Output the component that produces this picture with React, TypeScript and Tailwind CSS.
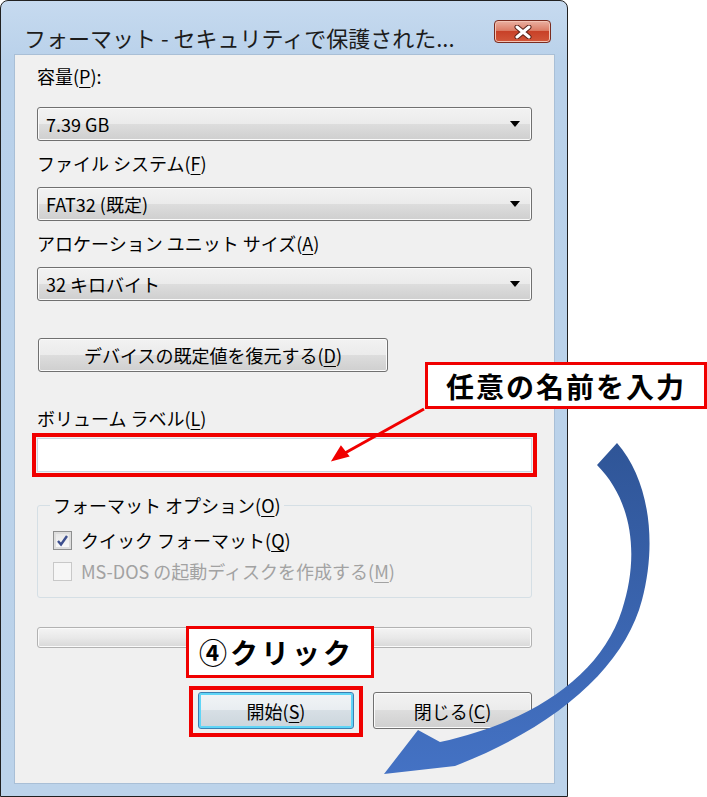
import React from "react";

const font = { fontFamily: '"Noto Sans CJK JP", "Noto Sans", sans-serif' };

function U({ children }: { children: React.ReactNode }) {
  return <span className="underline underline-offset-[3px] decoration-1">{children}</span>;
}

function Combo({ value }: { value: string }) {
  return (
    <div className="h-[34px] rounded-[3px] border border-[#707070] bg-[linear-gradient(#f2f2f2,#ebebeb_50%,#dddddd_50%,#cfcfcf)] shadow-[inset_0_0_0_1px_#fbfbfb] flex items-center justify-between pl-[8px] pr-[11px]">
      <span className="text-[18px] leading-[24px] text-black">{value}</span>
      <span className="w-0 h-0 border-x-[5px] border-x-transparent border-t-[6px] border-t-black" />
    </div>
  );
}

function CheckBox({ checked, disabled }: { checked?: boolean; disabled?: boolean }) {
  return (
    <span
      className={
        "w-[19px] h-[19px] shrink-0 flex items-center justify-center border " +
        (disabled
          ? "border-[#c8c8c8] bg-[#f6f6f6]"
          : "border-[#8e8f8f] bg-[linear-gradient(#e6e6e6,#fbfbfb)] shadow-[inset_0_0_0_2px_#dedede]")
      }
    >
      {checked && (
        <svg width="13" height="13" viewBox="0 0 13 13">
          <path d="M2 7 L5 10.5 L11 2" fill="none" stroke="#3d4f8e" strokeWidth="2.4" />
        </svg>
      )}
    </span>
  );
}

export default function App() {
  return (
    <div className="relative w-[707px] h-[797px] bg-white overflow-hidden" style={font}>
      {/* window */}
      <div className="w-[568px] h-[797px] flex flex-col rounded-t-[8px] border border-[#202020] bg-[linear-gradient(#c6daef,#b9d1ea_60px,#bcd3ea)] pl-[13px] pr-[12px] pb-[12px]">
        <div className="h-[53px] shrink-0 flex items-start justify-between pl-[10px] pr-[4px] pt-[19px]">
          <span className="mt-[3px] text-[22px] leading-[28px] text-[#1c1c1c] whitespace-nowrap">
            フォーマット - セキュリティで保護された...
          </span>
          <div className="w-[57px] h-[23px] rounded-[4px] border border-[#7a2c20] bg-[linear-gradient(#eab1a2,#dc7d66_45%,#c84128_50%,#d2573a)] shadow-[inset_0_0_0_1px_#f3c3b4] flex items-center justify-center">
            <svg width="20" height="14" viewBox="0 0 20 14">
              <path d="M4 2 L16 12 M16 2 L4 12" stroke="#5a2219" strokeWidth="5" strokeLinecap="round" />
              <path d="M4 2 L16 12 M16 2 L4 12" stroke="#ffffff" strokeWidth="3" strokeLinecap="round" />
            </svg>
          </div>
        </div>

        <div className="flex-1 flex flex-col bg-[#f0f0f0] border border-[#a9bfd6] px-[22px] pt-[9px] text-black">
          <div className="h-[24px] text-[18px] leading-[24px]">
            容量(<U>P</U>):
          </div>
          <div className="mt-[19px]">
            <Combo value="7.39 GB" />
          </div>
          <div className="mt-[10px] h-[24px] text-[18px] leading-[24px]">
            ファイル システム(<U>F</U>)
          </div>
          <div className="mt-[12px]">
            <Combo value="FAT32 (既定)" />
          </div>
          <div className="mt-[10px] h-[24px] text-[18px] leading-[24px]">
            アロケーション ユニット サイズ(<U>A</U>)
          </div>
          <div className="mt-[12px]">
            <Combo value="32 キロバイト" />
          </div>

          <div className="mt-[37px] ml-[1px] w-[350px] h-[34px] rounded-[3px] border border-[#707070] bg-[linear-gradient(#f2f2f2,#ebebeb_50%,#dddddd_50%,#cfcfcf)] shadow-[inset_0_0_0_1px_#fbfbfb] flex items-center justify-center text-[18px] leading-[24px]">
            デバイスの既定値を復元する(<U>D</U>)
          </div>

          <div className="mt-[34px] h-[24px] text-[18px] leading-[24px]">
            ボリューム ラベル(<U>L</U>)
          </div>
          <div className="mt-[3px] -mx-[5px] h-[44px] border-[4px] border-[#f00000] p-[1px]">
            <div className="h-full bg-white border border-[#c9d6e3]" />
          </div>

          <fieldset className="mt-[16px] border border-[#d5dfe5] rounded-[3px] px-[12px] pb-[14px]">
            <legend className="px-[3px] text-[18px] leading-[24px]">
              フォーマット オプション(<U>O</U>)
            </legend>
            <div className="mt-[11px] h-[24px] flex items-center gap-[9px] pl-[3px]">
              <CheckBox checked />
              <span className="text-[18px] leading-[24px]">
                クイック フォーマット(<U>Q</U>)
              </span>
            </div>
            <div className="mt-[7px] h-[24px] flex items-center gap-[9px] pl-[3px]">
              <CheckBox disabled />
              <span className="text-[18px] leading-[24px] text-[#a2a2a2]">
                MS-DOS の起動ディスクを作成する(<U>M</U>)
              </span>
            </div>
          </fieldset>

          <div className="mt-[29px] h-[21px] rounded-[3px] border border-[#b2b2b2] bg-[linear-gradient(#f4f4f4,#e9e9e9_50%,#d8d8d8)] shadow-[inset_0_0_0_1px_#fafafa]" />

          <div className="mt-[38px] flex justify-end items-start gap-[10px]">
            <div className="border-[4px] border-[#f00000] pt-[2px] pb-[4px] px-[5px]">
              <div className="w-[156px] h-[37px] rounded-[3px] border border-[#3c7fb1] bg-[linear-gradient(#f2f4f6,#e8edf1_50%,#d7dfe5_50%,#cbd5dc)] shadow-[inset_0_0_0_2px_#5fd5f7] flex items-center justify-center text-[18px] leading-[24px]">
                開始(<U>S</U>)
              </div>
            </div>
            <div className="mt-[6px] w-[159px] h-[37px] rounded-[3px] border border-[#707070] bg-[linear-gradient(#f2f2f2,#ebebeb_50%,#dddddd_50%,#cfcfcf)] shadow-[inset_0_0_0_1px_#fbfbfb] flex items-center justify-center text-[18px] leading-[24px]">
              閉じる(<U>C</U>)
            </div>
          </div>
        </div>
      </div>

      {/* callout: volume label */}
      <div className="absolute left-[425px] top-[362px] w-[282px] h-[47px] border-[3px] border-[#f00000] bg-white flex items-center justify-center">
        <span className="text-[28px] leading-[36px] font-bold tracking-[2px] text-black">任意の名前を入力</span>
      </div>

      {/* callout: click */}
      <div className="absolute left-[186px] top-[626px] w-[188px] h-[52px] border-[3px] border-[#f00000] bg-white flex items-center pl-[10px]">
        <span className="text-[28px] leading-[36px] font-bold tracking-[3px] text-black">④クリック</span>
      </div>

      {/* arrows */}
      <svg className="absolute left-0 top-0 pointer-events-none" width="707" height="797" viewBox="0 0 707 797">
        <defs>
          <linearGradient id="blueArrow" x1="0" y1="0" x2="0" y2="1">
            <stop offset="0" stopColor="#2f5597" />
            <stop offset="1" stopColor="#4472c4" />
          </linearGradient>
        </defs>
        <line x1="424" y1="409" x2="345" y2="453" stroke="#f00000" strokeWidth="3" />
        <path d="M333 460 L341 447 L348 456 Z" fill="#f00000" stroke="#f00000" strokeWidth="2" />
        <path
          d="M617 443 C648 478 658 540 642 600 C625 665 560 725 455 766 L384 774 L418 730 L440 742 C530 722 600 678 622 610 C640 555 632 500 597 465 Z"
          fill="url(#blueArrow)"
        />
      </svg>
    </div>
  );
}
